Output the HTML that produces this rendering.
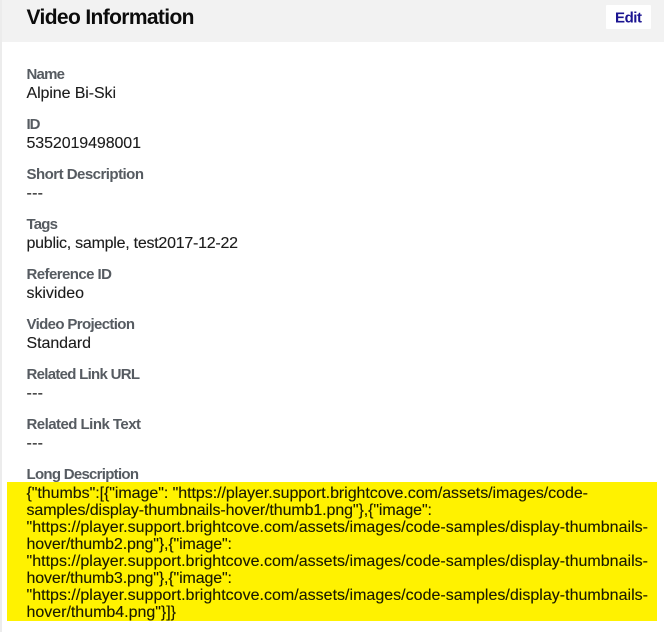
<!DOCTYPE html>
<html>
<head>
<meta charset="utf-8">
<style>
html,body{margin:0;padding:0;background:#fff;width:664px;height:632px;overflow:hidden}
svg{display:block}
text{font-family:"Liberation Sans",sans-serif;white-space:pre}
.l{font-size:15px;font-weight:700;fill:#565b61}
.v{font-size:16px;fill:#1c1c1c;stroke:#1c1c1c;stroke-width:.12px}
.d{font-size:16px;fill:#1a1a00;stroke:#1a1a00;stroke-width:.12px}
</style>
</head>
<body>
<svg width="664" height="632" viewBox="0 0 664 632" xmlns="http://www.w3.org/2000/svg">
<rect width="664" height="632" fill="#fff"/>
<rect x="0" y="0" width="2" height="632" fill="#ececec"/>
<rect x="2" y="0" width="662" height="42" fill="#f2f2f2"/>
<text x="26.5" y="24" font-size="21" font-weight="700" fill="#0c0c0c" textLength="168" lengthAdjust="spacing">Video Information</text>
<rect x="606" y="5" width="45" height="24" rx="1" fill="#fff"/>
<text x="615" y="22.5" font-size="15" font-weight="700" fill="#1b1491" textLength="27" lengthAdjust="spacing">Edit</text>

<text class="l" x="26.5" y="79" textLength="38.5" lengthAdjust="spacing">Name</text>
<text class="v" x="26.5" y="98" textLength="89.5" lengthAdjust="spacing">Alpine Bi-Ski</text>
<text class="l" x="26.5" y="129" textLength="14" lengthAdjust="spacing">ID</text>
<text class="v" x="26.5" y="148" textLength="114.5" lengthAdjust="spacing">5352019498001</text>
<text class="l" x="26.5" y="179" textLength="117.5" lengthAdjust="spacing">Short Description</text>
<text class="v" x="26.5" y="198" textLength="16.5" lengthAdjust="spacing">---</text>
<text class="l" x="26.5" y="229" textLength="31.5" lengthAdjust="spacing">Tags</text>
<text class="v" x="26.5" y="248" textLength="211.5" lengthAdjust="spacing">public, sample, test2017-12-22</text>
<text class="l" x="26.5" y="279" textLength="85.5" lengthAdjust="spacing">Reference ID</text>
<text class="v" x="26.5" y="298" textLength="57.5" lengthAdjust="spacing">skivideo</text>
<text class="l" x="26.5" y="329" textLength="108.5" lengthAdjust="spacing">Video Projection</text>
<text class="v" x="26.5" y="348" textLength="64.5" lengthAdjust="spacing">Standard</text>
<text class="l" x="26.5" y="379" textLength="113.5" lengthAdjust="spacing">Related Link URL</text>
<text class="v" x="26.5" y="398" textLength="16.5" lengthAdjust="spacing">---</text>
<text class="l" x="26.5" y="429" textLength="114.5" lengthAdjust="spacing">Related Link Text</text>
<text class="v" x="26.5" y="448" textLength="16.5" lengthAdjust="spacing">---</text>
<text class="l" x="26.5" y="479" textLength="112.5" lengthAdjust="spacing">Long Description</text>

<rect x="7" y="482" width="650" height="139" fill="#fff200"/>
<text class="d" x="26.5" y="498" textLength="561.5" lengthAdjust="spacing">{"thumbs":[{"image": "https://player.support.brightcove.com/assets/images/code-</text>
<text class="d" x="26.5" y="515" textLength="405.5" lengthAdjust="spacing">samples/display-thumbnails-hover/thumb1.png"},{"image":</text>
<text class="d" x="26.5" y="532" textLength="621.5" lengthAdjust="spacing">"https://player.support.brightcove.com/assets/images/code-samples/display-thumbnails-</text>
<text class="d" x="26.5" y="549" textLength="205.5" lengthAdjust="spacing">hover/thumb2.png"},{"image":</text>
<text class="d" x="26.5" y="566" textLength="621.5" lengthAdjust="spacing">"https://player.support.brightcove.com/assets/images/code-samples/display-thumbnails-</text>
<text class="d" x="26.5" y="583" textLength="205.5" lengthAdjust="spacing">hover/thumb3.png"},{"image":</text>
<text class="d" x="26.5" y="600" textLength="621.5" lengthAdjust="spacing">"https://player.support.brightcove.com/assets/images/code-samples/display-thumbnails-</text>
<text class="d" x="26.5" y="617" textLength="149.5" lengthAdjust="spacing">hover/thumb4.png"}]}</text>
</svg>
</body>
</html>
